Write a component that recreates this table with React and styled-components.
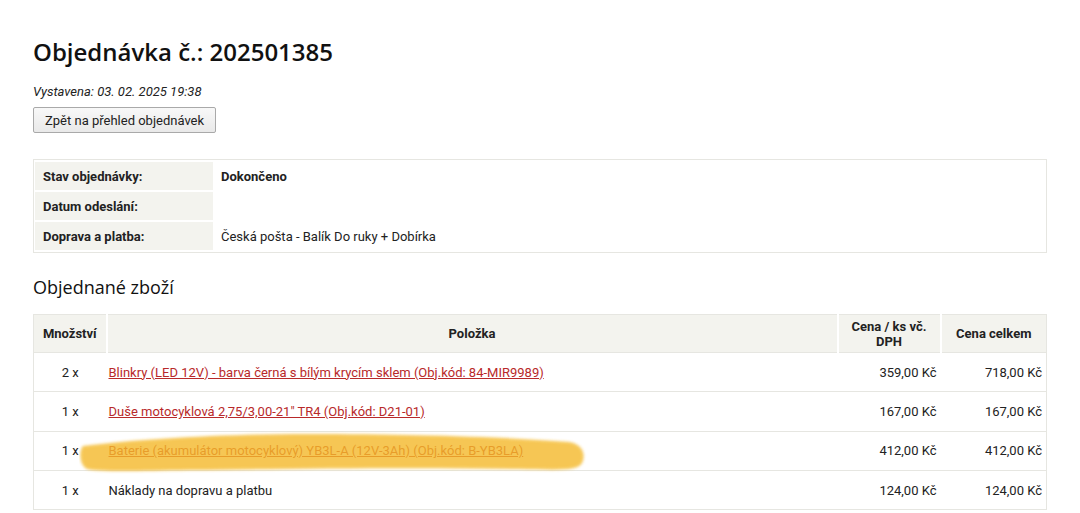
import styled, { createGlobalStyle } from "styled-components";

const GlobalStyle = createGlobalStyle`
  body {
    margin: 0;
    background: #fff;
    font-family: Roboto, "Liberation Sans", sans-serif;
    color: #222;
  }
`;

const items = [
  { qty: "2 x", name: "Blinkry (LED 12V) - barva černá s bílým krycím sklem (Obj.kód: 84-MIR9989)", link: true, price: "359,00 Kč", total: "718,00 Kč" },
  { qty: "1 x", name: "Duše motocyklová 2,75/3,00-21\" TR4 (Obj.kód: D21-01)", link: true, price: "167,00 Kč", total: "167,00 Kč" },
  { qty: "1 x", name: "Baterie (akumulátor motocyklový) YB3L-A (12V-3Ah) (Obj.kód: B-YB3LA)", link: true, marked: true, price: "412,00 Kč", total: "412,00 Kč" },
  { qty: "1 x", name: "Náklady na dopravu a platbu", price: "124,00 Kč", total: "124,00 Kč" },
];

// yellow highlighter stroke drawn over the third item
const Marker = () => (
  <MarkerSvg viewBox="0 0 510 44" width="510" height="44">
    <defs>
      <filter id="soft" x="-5%" y="-30%" width="110%" height="160%">
        <feGaussianBlur stdDeviation="1.8" />
      </filter>
    </defs>
    <path
      d="M4 15 C60 8 140 3 230 3 C330 3 430 6 490 11 C504 13 507 24 503 32 C499 40 480 39 440 38 C330 36 200 38 110 39 C60 40 20 41 8 38 C0 34 0 19 4 15 Z"
      fill="#f4b92a"
      opacity="0.8"
      filter="url(#soft)"
    />
  </MarkerSvg>
);

const App = () => {
  return (
    <Page>
      <GlobalStyle />
      <Title>Objednávka č.: 202501385</Title>
      <Issued>Vystavena: 03. 02. 2025 19:38</Issued>
      <BackButton>Zpět na přehled objednávek</BackButton>

      <InfoTable>
        <tbody>
          <tr>
            <InfoLabel>Stav objednávky:</InfoLabel>
            <InfoValue $bold>Dokončeno</InfoValue>
          </tr>
          <tr>
            <InfoLabel>Datum odeslání:</InfoLabel>
            <InfoValue></InfoValue>
          </tr>
          <tr>
            <InfoLabel>Doprava a platba:</InfoLabel>
            <InfoValue>Česká pošta - Balík Do ruky + Dobírka</InfoValue>
          </tr>
        </tbody>
      </InfoTable>

      <SubTitle>Objednané zboží</SubTitle>

      <ItemsTable>
        <colgroup>
          <col style={{ width: 73 }} />
          <col />
          <col style={{ width: 103 }} />
          <col style={{ width: 106 }} />
        </colgroup>
        <thead>
          <tr>
            <Head>Množství</Head>
            <Head>Položka</Head>
            <Head>Cena / ks vč.<br />DPH</Head>
            <Head $last>Cena celkem</Head>
          </tr>
        </thead>
        <tbody>
          {items.map((it, i) => (
            <tr key={i}>
              <Cell $align="center">{it.qty}</Cell>
              <ItemCell>
                {it.link ? <ItemLink href="#">{it.name}</ItemLink> : it.name}
                {it.marked && <Marker />}
              </ItemCell>
              <Cell $align="right">{it.price}</Cell>
              <Cell $align="right">{it.total}</Cell>
            </tr>
          ))}
        </tbody>
      </ItemsTable>
    </Page>
  );
};

const Page = styled.div`
  padding: 0 33px;
  width: 1014px;
`;

const Title = styled.h1`
  font-family: "Open Sans", "Noto Sans", sans-serif;
  font-weight: 600;
  font-size: 24px;
  line-height: 32px;
  margin: 36px 0 0;
  color: #111;
`;

const Issued = styled.p`
  font-style: italic;
  font-size: 13px;
  margin: 16px 0 0;
  line-height: 16px;
`;

const BackButton = styled.button`
  display: block;
  margin-top: 7px;
  height: 26px;
  padding: 0 11px;
  font-family: Roboto, "Liberation Sans", sans-serif;
  font-size: 13px;
  color: #222;
  background: linear-gradient(#f8f8f8, #e9e9e9);
  border: 1px solid #a9a9a9;
  border-radius: 2px;
`;

const InfoTable = styled.table`
  margin-top: 26px;
  width: 100%;
  border: 1px solid #e6e6e1;
  border-spacing: 0 2px;
  padding: 0 1px;
  font-size: 13px;
`;

const InfoLabel = styled.td`
  width: 162px;
  height: 28px;
  padding: 0 8px;
  background: #f3f3ee;
  font-weight: 700;
  border-right: 2px solid #fff;
`;

const InfoValue = styled.td`
  padding: 0 6px;
  font-weight: ${(p) => (p.$bold ? 700 : 400)};
`;

const SubTitle = styled.h2`
  font-family: "Open Sans", "Noto Sans", sans-serif;
  font-weight: 400;
  font-size: 18px;
  line-height: 24px;
  margin: 22px 0 0;
  color: #111;
`;

const ItemsTable = styled.table`
  margin-top: 15px;
  width: 100%;
  border-collapse: collapse;
  table-layout: fixed;
  border-left: 1px solid #e6e6e1;
  border-right: 1px solid #e6e6e1;
  border-top: 1px solid #e6e6e1;
  font-size: 13px;
`;

const Head = styled.th`
  height: 37px;
  padding: 0 4px;
  background: #f3f3ee;
  font-weight: 700;
  font-size: 13px;
  line-height: 15px;
  text-align: center;
  border-right: ${(p) => (p.$last ? "none" : "2px solid #fff")};
  border-bottom: 1px solid #e6e6e1;
`;

const Cell = styled.td`
  height: 38.3px;
  padding: 0 4px;
  text-align: ${(p) => p.$align};
  border-bottom: 1px solid #e6e6e1;
`;

const ItemCell = styled.td`
  position: relative;
  height: 38.3px;
  padding: 0 2px;
  border-bottom: 1px solid #e6e6e1;
`;

const ItemLink = styled.a`
  color: #b8292a;
  text-decoration: underline;
`;

const MarkerSvg = styled.svg`
  position: absolute;
  left: -28px;
  top: -1px;
  pointer-events: none;
`;

export default App;
